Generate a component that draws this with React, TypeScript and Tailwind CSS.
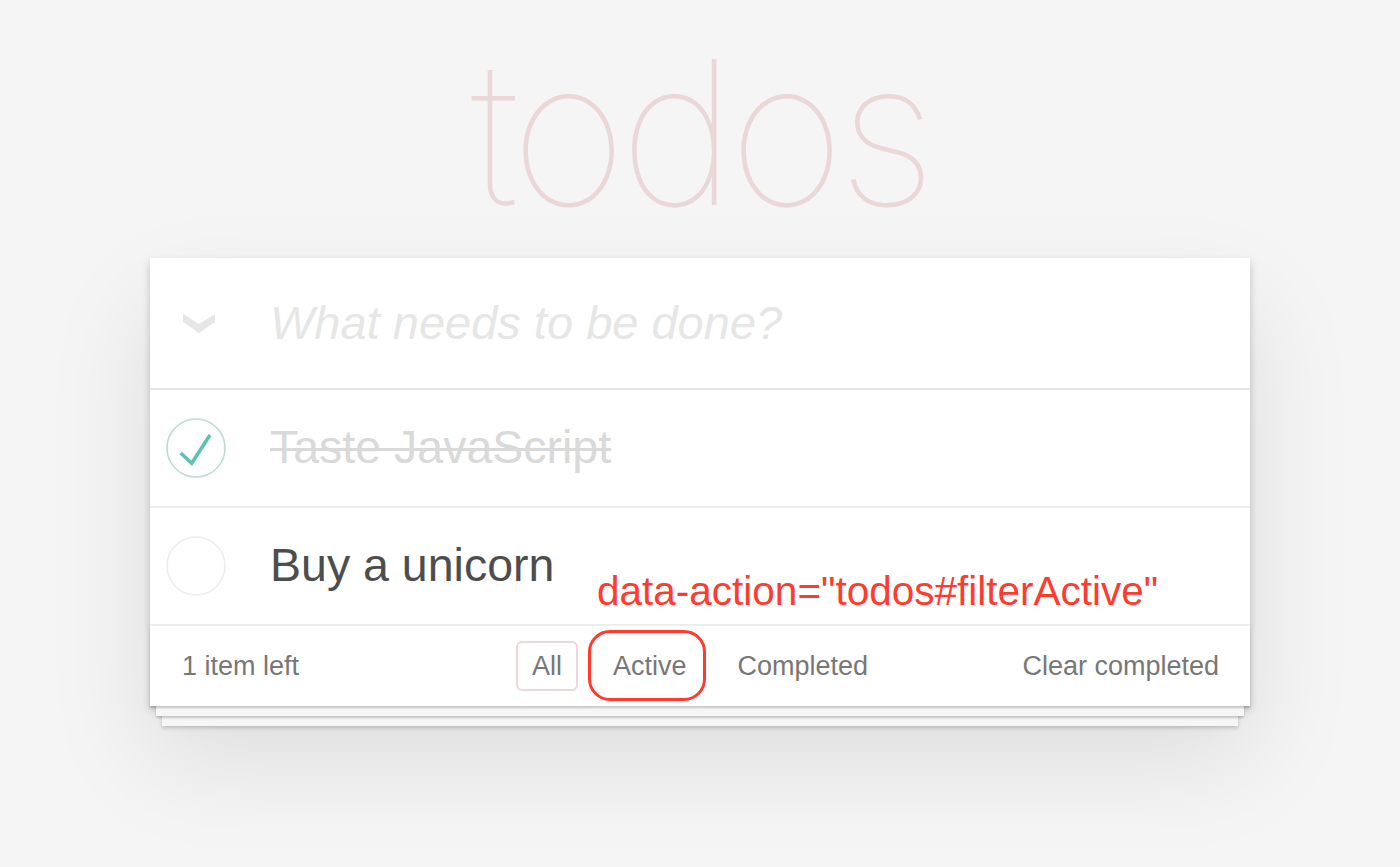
import React from "react";

const sans = { fontFamily: '"Liberation Sans", Arial, sans-serif' };

function Chevron() {
  return (
    <svg width="32" height="19" viewBox="0 0 32 19">
      <path d="M0 0 L16 10 L32 0 L32 8 L16 19 L0 8 Z" fill="#e6e6e6" />
    </svg>
  );
}

function Check({ done }: { done: boolean }) {
  return (
    <svg width="60" height="60" viewBox="0 0 60 60" className="shrink-0">
      <circle cx="30" cy="30" r="29" fill="none" stroke={done ? "#bddad5" : "#ededed"} strokeWidth="1.6" />
      {done && (
        <path d="M14.7 35 L25.7 45.3 L44 17" fill="none" stroke="#5dc2af" strokeWidth="3.6" />
      )}
    </svg>
  );
}

function TodoRow({ title, done }: { title: string; done: boolean }) {
  return (
    <li className="h-[118px] flex items-center pl-4 border-b-2 border-[#ededed]">
      <Check done={done} />
      <span
        className={
          done
            ? "ml-[44px] text-[46.5px] text-[#d9d9d9] line-through decoration-[3px]"
            : "ml-[44px] text-[46.5px] text-[#4d4d4d]"
        }
      >
        {title}
      </span>
    </li>
  );
}

export default function App() {
  return (
    <div className="h-[867px] bg-[#f5f5f5] flex flex-col items-center overflow-hidden" style={sans}>
      <h1
        className="h-[258px] pt-[32px] text-[200px] leading-[200px] font-thin text-[#ead7d7] tracking-[-7px]"
        style={{ fontFamily: "Inter, Roboto, sans-serif" }}
      >
        todos
      </h1>

      <section className="relative w-[1100px] bg-white shadow-[0_4px_8px_rgba(0,0,0,0.2),0_50px_100px_rgba(0,0,0,0.1)]">
        <header className="h-[132px] flex items-center border-b-2 border-[#e6e6e6]">
          <div className="w-[120px] pl-[33px] flex">
            <Chevron />
          </div>
          <span className="text-[47px] italic text-[#e6e6e6]">What needs to be done?</span>
        </header>

        <ul>
          <TodoRow title="Taste JavaScript" done />
          <TodoRow title="Buy a unicorn" done={false} />
        </ul>

        <footer className="relative h-[80px] flex items-center justify-between pl-8 pr-[31px] text-[27px] text-[#777] shadow-[0_2px_2px_rgba(0,0,0,0.2),0_16px_0_-6px_#f6f6f6,0_18px_2px_-6px_rgba(0,0,0,0.2),0_32px_0_-12px_#f6f6f6,0_34px_4px_-12px_rgba(0,0,0,0.2)]">
          <span>1 item left</span>
          <ul className="absolute inset-x-0 flex justify-center gap-[19px]">
            <li className="px-[14px] py-[6px] border-2 border-[#efd5d5] rounded-[6px] leading-[34px]">All</li>
            <li className="px-[14px] py-[6px] border-2 border-transparent rounded-[6px] leading-[34px]">Active</li>
            <li className="px-[14px] py-[6px] border-2 border-transparent rounded-[6px] leading-[34px]">Completed</li>
          </ul>
          <span className="relative">Clear completed</span>
        </footer>

        <div className="absolute left-[438px] top-[372px] w-[118px] h-[71px] border-[3px] border-[#ff3b30] rounded-[22px]" />
        <div className="absolute left-[447px] top-[313px] text-[40.5px] leading-none text-[#ff3b30] whitespace-nowrap">
          data-action="todos#filterActive"
        </div>
      </section>
    </div>
  );
}
